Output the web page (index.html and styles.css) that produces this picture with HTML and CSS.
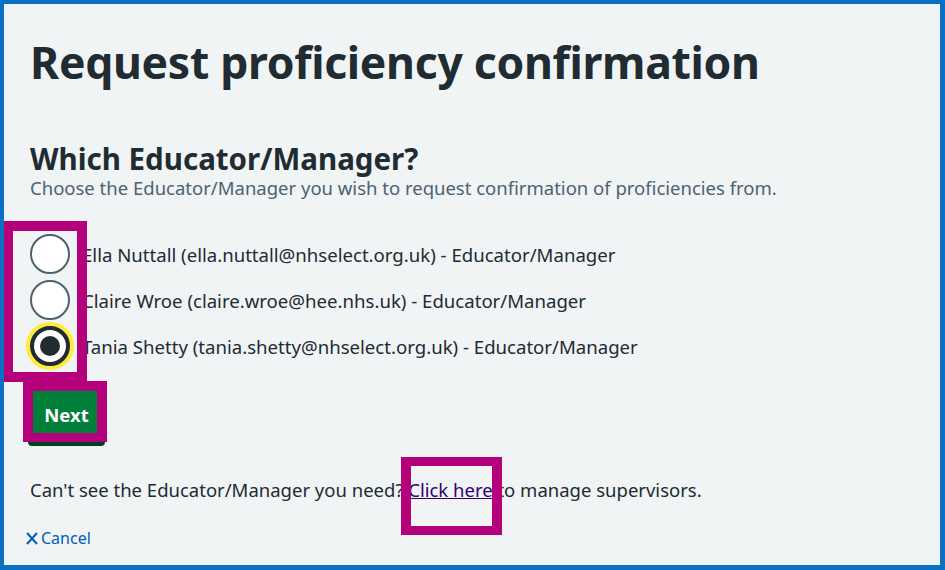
FILE: index.html
```html
<!DOCTYPE html>
<html lang="en">
<head>
<meta charset="utf-8">
<title>Request proficiency confirmation</title>
<link rel="stylesheet" href="styles.css">
</head>
<body>
<div class="frame">
  <h1 class="title">Request proficiency confirmation</h1>
  <h2 class="question">Which Educator/Manager?</h2>
  <p class="hint">Choose the Educator/Manager you wish to request confirmation of proficiencies from.</p>
  <div class="radios">
    <div class="radio-row"><span class="radio"></span><span class="label">Ella Nuttall (ella.nuttall@nhselect.org.uk) - Educator/Manager</span></div>
    <div class="radio-row"><span class="radio"></span><span class="label">Claire Wroe (claire.wroe@hee.nhs.uk) - Educator/Manager</span></div>
    <div class="radio-row"><span class="radio radio-checked"></span><span class="label">Tania Shetty (tania.shetty@nhselect.org.uk) - Educator/Manager</span></div>
    <span class="annot annot-radios"></span>
  </div>
  <div class="button-wrap">
    <button class="next">Next</button>
    <span class="annot annot-next"></span>
  </div>
  <p class="help">Can't see the Educator/Manager you need? <span class="link-wrap"><a class="link" href="#">Click here</a><span class="annot annot-link"></span></span> to manage supervisors.</p>
  <a class="cancel" href="#"><svg class="cancel-icon" viewBox="0 0 12 13"><path d="M1 1 L11 12 M11 1 L1 12" stroke="#005eb8" stroke-width="2" fill="none"/></svg>Cancel</a>
</div>
</body>
</html>
```

FILE: styles.css
```css
html, body {
  margin: 0;
  padding: 0;
  background: #f0f4f5;
}
.frame {
  width: 945px;
  height: 570px;
  box-sizing: border-box;
  border: 4px solid #0b6fc2;
  border-right-width: 5px;
  border-bottom-width: 5px;
  background: #f0f4f5;
  padding: 0 0 0 26px;
  font-family: "Noto Sans", "Open Sans", sans-serif;
  color: #212b32;
  overflow: hidden;
}
.title {
  margin: 0;
  padding-top: 26px;
  font-size: 44.5px;
  line-height: 64px;
  font-weight: 700;
  letter-spacing: -0.3px;
}
.question {
  margin: 49px 0 0;
  font-size: 29.5px;
  line-height: 32px;
  font-weight: 700;
}
.hint {
  margin: 0;
  font-size: 18.5px;
  line-height: 26px;
  color: #4c6272;
}
.radios {
  position: relative;
  margin-top: 33px;
  display: flex;
  flex-direction: column;
  gap: 6px;
}
.radio-row {
  display: flex;
  align-items: center;
  height: 40px;
  gap: 12px;
}
.radio {
  position: relative;
  width: 40px;
  height: 40px;
  box-sizing: border-box;
  border: 2px solid #4c6272;
  border-radius: 50%;
  background: #fff;
  flex: none;
}
.radio-checked {
  border: 4px solid #212b32;
  box-shadow: 0 0 0 4px #ffeb3b;
}
.radio-checked::after {
  content: "";
  position: absolute;
  left: 6px;
  top: 6px;
  width: 20px;
  height: 20px;
  border-radius: 50%;
  background: #212b32;
}
.label {
  font-size: 18.6px;
  color: #212b32;
}
.annot {
  position: absolute;
  border: 10px solid #b5007b;
  box-sizing: border-box;
  pointer-events: none;
}
.annot-radios {
  left: -27px;
  top: -13px;
  width: 84px;
  height: 161px;
}
.button-wrap {
  position: relative;
  margin-top: 20px;
  margin-left: -2px;
  width: 77px;
  height: 56px;
}
.next {
  display: block;
  width: 77px;
  height: 56px;
  border: none;
  border-radius: 4px;
  background: #007f3b;
  box-shadow: 0 4px 0 #00401e;
  color: #fff;
  font-family: "Noto Sans", "Open Sans", sans-serif;
  font-weight: 700;
  font-size: 18.5px;
  padding: 0;
}
.annot-next {
  left: -5px;
  top: -5px;
  width: 84px;
  height: 61px;
  border-width: 10px 10px 9px;
}
.help {
  margin: 35px 0 0;
  font-size: 18.5px;
  line-height: 26px;
}
.link-wrap {
  position: relative;
}
.link {
  color: #330072;
  text-decoration: underline;
}
.annot-link {
  left: -7px;
  top: -20px;
  width: 101px;
  height: 78px;
  border-width: 9px 10px;
}
.cancel {
  display: flex;
  width: fit-content;
  align-items: center;
  gap: 3px;
  margin-top: 25px;
  margin-left: -4px;
  font-size: 16px;
  line-height: 20px;
  color: #005eb8;
  text-decoration: none;
}
.cancel-icon {
  display: block;
  flex: none;
  width: 12px;
  height: 13px;
}
```
